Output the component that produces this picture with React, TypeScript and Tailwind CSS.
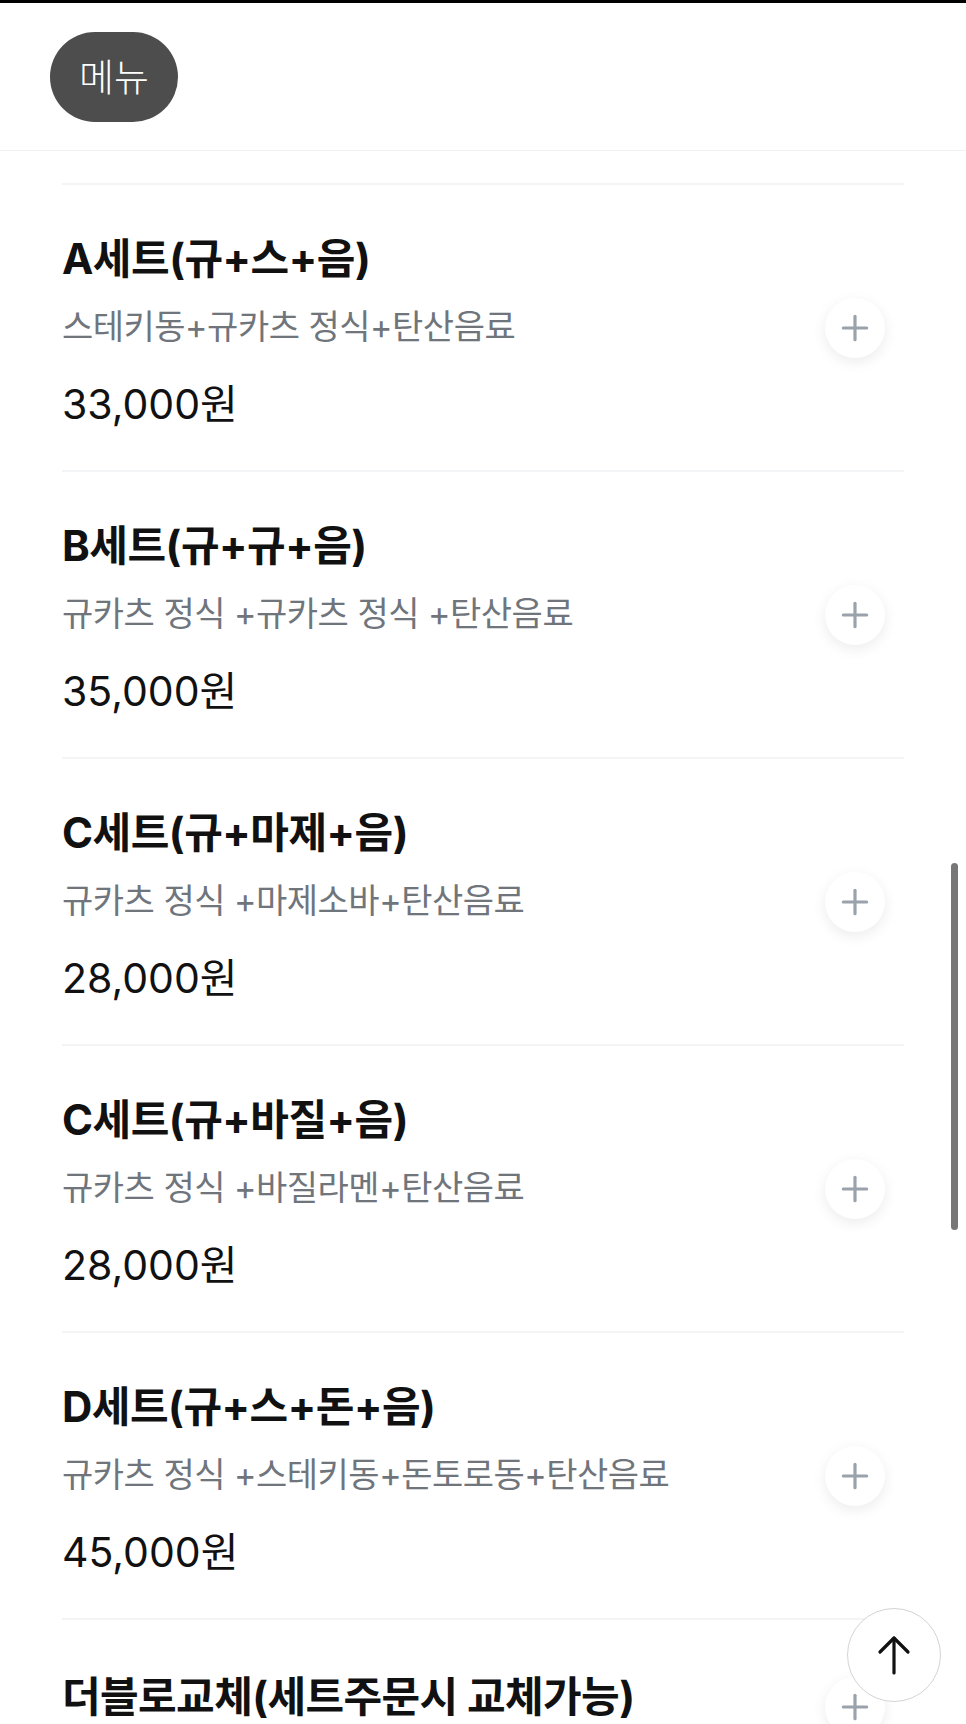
import { Plus } from 'lucide-react'

interface MenuItem {
  name: string
  desc?: string
  price?: string
}

const items: MenuItem[] = [
  { name: 'A세트(규+스+음)', desc: '스테키동+규카츠 정식+탄산음료', price: '33,000원' },
  { name: 'B세트(규+규+음)', desc: '규카츠 정식 +규카츠 정식 +탄산음료', price: '35,000원' },
  { name: 'C세트(규+마제+음)', desc: '규카츠 정식 +마제소바+탄산음료', price: '28,000원' },
  { name: 'C세트(규+바질+음)', desc: '규카츠 정식 +바질라멘+탄산음료', price: '28,000원' },
  { name: 'D세트(규+스+돈+음)', desc: '규카츠 정식 +스테키동+돈토로동+탄산음료', price: '45,000원' },
]

const font = { fontFamily: 'Inter, "Noto Sans CJK KR", "Noto Sans", sans-serif' }

function AddButton() {
  return (
    <button className="w-[60px] h-[60px] shrink-0 rounded-full bg-white shadow-[0_4px_14px_rgba(0,0,0,0.08)] flex items-center justify-center mr-[19px]">
      <Plus className="w-[40px] h-[40px] text-[#9aa2ab]" strokeWidth={1.9} />
    </button>
  )
}

export default function App() {
  return (
    <div className="relative h-[1724px] overflow-hidden bg-white" style={font}>
      <div className="h-[3px] bg-black" />
      <header className="h-[148px] border-b border-[#f0f1f3] flex items-center px-[50px]">
        <button className="w-[128px] h-[90px] rounded-full bg-[#4d4d4d] text-white text-[38px] font-light leading-none">
          메뉴
        </button>
      </header>

      <div className="px-[62px] pt-[32px]">
        {items.map((item, i) => (
          <div key={i} className="h-[287px] border-t-2 border-[#f3f4f6] flex items-center justify-between">
            <div className="text-[#111] pt-[8px]">
              <div className="text-[42px] font-bold leading-[40px] tracking-[-0.5px]">{item.name}</div>
              <div className="mt-[28px] text-[34px] leading-[40px] text-[#70757c] tracking-[-0.5px]">{item.desc}</div>
              <div className="mt-[37px] text-[41px] leading-[40px]">{item.price}</div>
            </div>
            <AddButton />
          </div>
        ))}
        <div className="h-[176px] border-t-2 border-[#f3f4f6] flex items-center justify-between">
          <div className="text-[42px] font-bold leading-[40px] text-[#111] tracking-[-0.6px] -mt-[20px]">
            더블로교체(세트주문시 교체가능)
          </div>
          <AddButton />
        </div>
      </div>

      {/* scroll to top */}
      <button className="absolute left-[847px] top-[1608px] w-[94px] h-[94px] rounded-full bg-white/95 border border-[#d4d4d4] flex items-center justify-center">
        <svg width="34" height="40" viewBox="0 0 34 40" fill="none" stroke="#111" strokeWidth="3.2" strokeLinecap="round" strokeLinejoin="round">
          <path d="M17 38V3" />
          <path d="M3 17 17 3l14 14" />
        </svg>
      </button>

      {/* overlay scrollbar */}
      <div className="absolute left-[951px] top-[863px] w-[7px] h-[367px] rounded-full bg-[#777]" />
    </div>
  )
}
